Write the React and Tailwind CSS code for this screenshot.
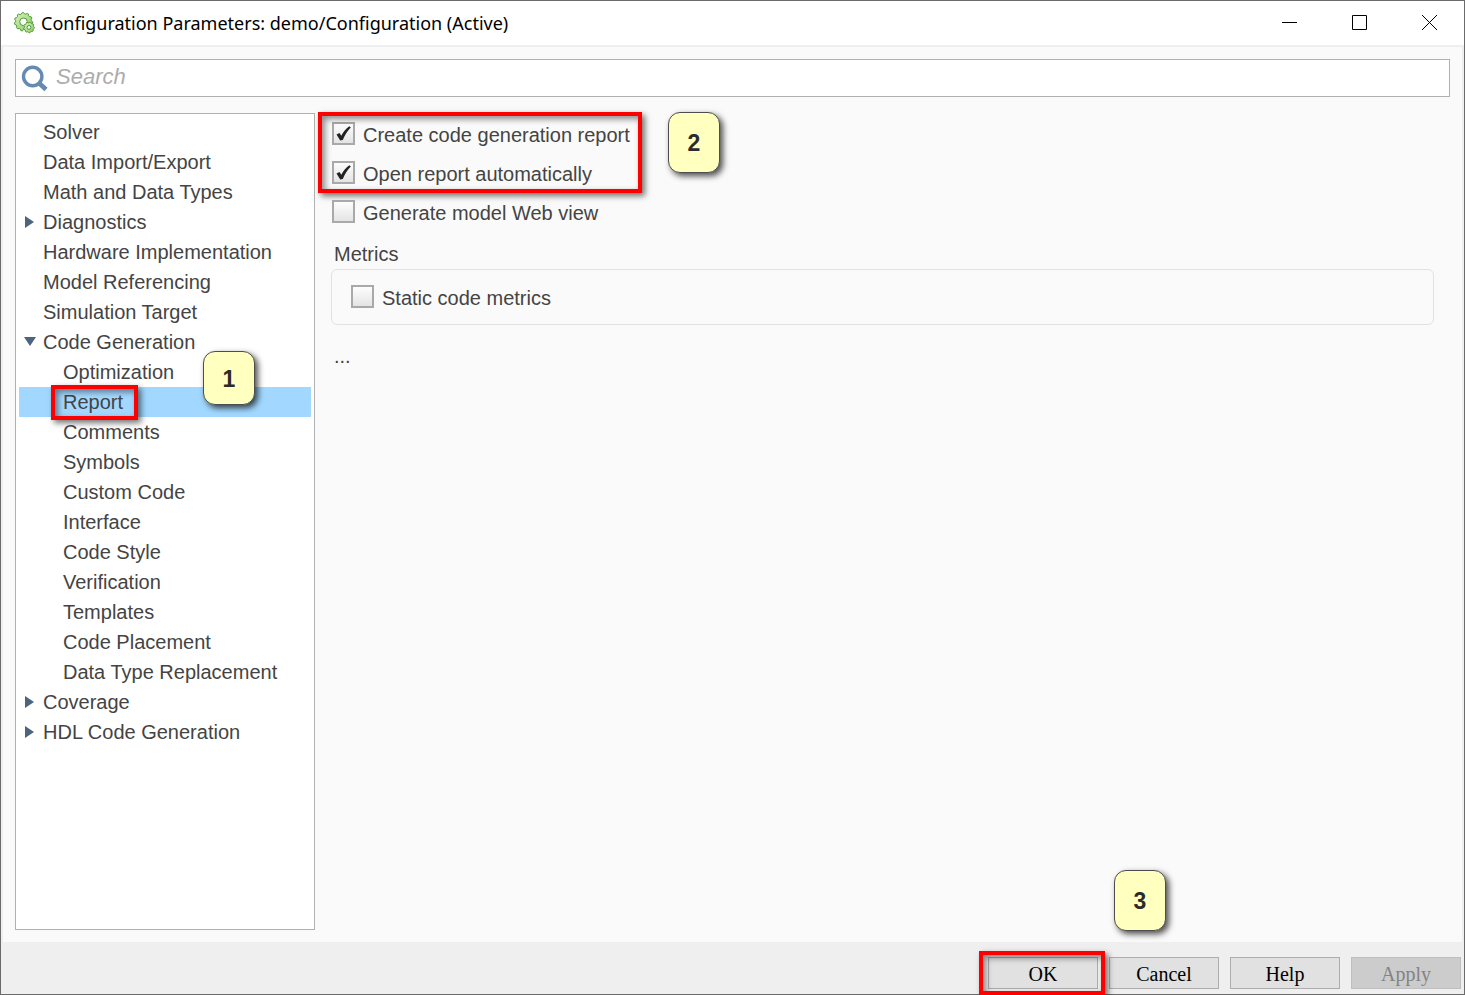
import { useState } from 'react';
import clsx from 'clsx';

const TREE = [
  { label: 'Solver' },
  { label: 'Data Import/Export' },
  { label: 'Math and Data Types' },
  { label: 'Diagnostics', arrow: 'right' },
  { label: 'Hardware Implementation' },
  { label: 'Model Referencing' },
  { label: 'Simulation Target' },
  {
    label: 'Code Generation',
    arrow: 'down',
    children: [
      'Optimization',
      'Report',
      'Comments',
      'Symbols',
      'Custom Code',
      'Interface',
      'Code Style',
      'Verification',
      'Templates',
      'Code Placement',
      'Data Type Replacement',
    ],
  },
  { label: 'Coverage', arrow: 'right' },
  { label: 'HDL Code Generation', arrow: 'right' },
];

function Gear({ cx, cy, r, hole, teeth }) {
  const points = [];
  for (let i = 0; i < teeth * 4; i++) {
    const a = (i / (teeth * 4)) * Math.PI * 2;
    const rad = i % 4 < 2 ? r : r * 0.86;
    points.push(`${cx + Math.cos(a) * rad},${cy + Math.sin(a) * rad}`);
  }
  return (
    <g stroke="#4f9a3c" strokeWidth="1" strokeLinejoin="round">
      <polygon points={points.join(' ')} fill="url(#gearFill)" />
      <circle cx={cx} cy={cy} r={hole} fill="#fff" />
    </g>
  );
}

function GearsIcon() {
  return (
    <svg width="22" height="22" viewBox="0 0 22 22" aria-hidden="true">
      <defs>
        <linearGradient id="gearFill" x1="0" y1="0" x2="1" y2="1">
          <stop offset="0" stopColor="#dcf4bb" />
          <stop offset="1" stopColor="#84cb60" />
        </linearGradient>
      </defs>
      <Gear cx={10.5} cy={9.8} r={9.2} hole={3.8} teeth={11} />
      <Gear cx={16} cy={15.4} r={5.4} hole={1.9} teeth={9} />
    </svg>
  );
}

// Red frame drawn around the thing to click
function Highlight({ className }) {
  return (
    <span
      className={clsx(
        'pointer-events-none absolute border-4 border-[#ff0000] shadow-[3px_3px_6px_rgba(0,0,0,0.55),inset_3px_3px_6px_rgba(0,0,0,0.45)]',
        className
      )}
    />
  );
}

// Numbered step note
function Step({ n, className }) {
  return (
    <span
      className={clsx(
        'pointer-events-none absolute z-10 flex w-[52px] items-center justify-center rounded-xl border border-[#4d4d4d] bg-[#ffffbf] pt-0.5 text-[23px] font-bold text-[#2b2b2b] shadow-[3px_3px_6px_rgba(0,0,0,0.7)]',
        className
      )}
    >
      {n}
    </span>
  );
}

function Arrow({ dir }) {
  return (
    <svg width="24" height="30" viewBox="0 0 24 30" className="shrink-0" aria-hidden="true">
      {dir === 'right' && <path d="M6 9 L15 15 L6 21 Z" fill="#4c647d" />}
      {dir === 'down' && <path d="M5 10 L17 10 L11 19 Z" fill="#4c647d" />}
    </svg>
  );
}

function Check({ label, defaultChecked }) {
  return (
    <label className="flex h-[39px] w-fit items-center gap-2">
      <span className="relative flex">
        <input
          type="checkbox"
          defaultChecked={defaultChecked}
          className="peer size-[23px] appearance-none border-2 border-[#a9a9a9] bg-linear-to-b from-[#fdfdfd] to-[#e4e4e4]"
        />
        <svg
          viewBox="0 0 23 23"
          className="pointer-events-none absolute inset-0 hidden peer-checked:block"
          aria-hidden="true"
        >
          <path d="M4.5 12.5 L7.5 11 L9.3 13.8 C11.3 9.8 13.8 6.8 17.3 4.2 L18.8 5.5 C15.3 9 12.8 13.2 10.8 18 L8.2 18.6 Z" fill="#222" />
        </svg>
      </span>
      <span className="pt-[3px]">{label}</span>
    </label>
  );
}

function TreeItem({ label, arrow, child, selected, onSelect }) {
  return (
    <li>
      <button
        onClick={() => onSelect(label)}
        className={clsx('flex h-[30px] w-full items-center text-left', selected && 'bg-[#a2d8ff]', child && 'pl-5')}
      >
        <Arrow dir={arrow} />
        <span className="relative">
          {label}
          {label === 'Report' && <Highlight className="-top-[3px] -right-[15px] -bottom-1 -left-3" />}
          {label === 'Optimization' && <Step n={1} className="-top-[7px] left-[140px] h-[54px]" />}
        </span>
      </button>
    </li>
  );
}

const dialogButton =
  "h-8 w-[110px] border border-[#adadad] bg-[#e1e1e1] pt-px font-['Liberation_Serif',serif] text-xl text-black disabled:border-[#bfbfbf] disabled:bg-[#cccccc] disabled:text-[#838383]";

export default function App() {
  const [selected, setSelected] = useState('Report');

  return (
    <div className="flex min-h-screen flex-col overflow-hidden bg-[#6b6b6b] p-px font-['Liberation_Sans',Arial,sans-serif] text-xl text-[#444444]">
      {/* Title bar */}
      <header className="flex h-11 items-center bg-white pb-px pl-3">
        <GearsIcon />
        <h1 className="ml-[6px] flex-1 font-['Noto_Sans',sans-serif] text-lg text-black">
          Configuration Parameters: demo/Configuration (Active)
        </h1>
        <button aria-label="Minimize" className="flex h-full w-[70px] items-center justify-center">
          <svg width="15" height="15" shapeRendering="crispEdges"><path d="M0 7.5 H15" stroke="#000" /></svg>
        </button>
        <button aria-label="Maximize" className="flex h-full w-[70px] items-center justify-center">
          <svg width="15" height="15"><path d="M0.5 0.5 H14.5 V14.5 H0.5 Z" fill="none" stroke="#000" /></svg>
        </button>
        <button aria-label="Close" className="flex h-full w-[70px] items-center justify-center">
          <svg width="15" height="15"><path d="M0 0 L15 15 M15 0 L0 15" stroke="#000" /></svg>
        </button>
      </header>

      <div className="flex flex-1 flex-col gap-4 border-x-2 border-t-2 border-[#efefef] bg-[#fafafa] p-3">
        {/* Search */}
        <div className="flex h-[38px] items-center border border-[#b0b0b0] bg-white pl-1">
          <svg width="32" height="32" viewBox="0 0 32 32" className="shrink-0" aria-hidden="true">
            <circle cx="12.7" cy="14.5" r="9.2" fill="none" stroke="#658bb3" strokeWidth="3.4" />
            <path d="M19.5 21.5 L26 27.5" stroke="#658bb3" strokeWidth="4.6" />
          </svg>
          <input
            type="text"
            aria-label="Search"
            placeholder="Search"
            className="h-full flex-1 pl-1 pb-[3px] text-[22px] outline-none placeholder:text-[#acacac] placeholder:italic"
          />
        </div>

        <div className="flex flex-1">
          {/* Category tree */}
          <nav className="w-[300px] shrink-0 border border-[#b0b0b0] bg-white p-[3px]">
            <ul>
              {TREE.flatMap(item => [
                <TreeItem
                  key={item.label}
                  label={item.label}
                  arrow={item.arrow}
                  selected={selected === item.label}
                  onSelect={setSelected}
                />,
                ...(item.children || []).map(c => (
                  <TreeItem key={c} label={c} child selected={selected === c} onSelect={setSelected} />
                )),
              ])}
            </ul>
          </nav>

          {/* Report options */}
          <main className="min-w-0 flex-1 pt-px pr-4 pl-4">
            <div className="relative w-fit pl-px">
              <Check label="Create code generation report" defaultChecked />
              <Check label="Open report automatically" defaultChecked />
              <Highlight className="-top-[2px] -right-3 -bottom-px -left-[13px]" />
              <Step n={2} className="-top-[2px] left-[337px] h-[61px]" />
            </div>
            <div className="pl-px">
              <Check label="Generate model Web view" />
            </div>

            <h2 id="metrics" className="mt-2 pl-[3px] leading-[30px]">Metrics</h2>
            <div role="group" aria-labelledby="metrics" className="flex h-14 items-center rounded-md border border-[#e2e2e2] pb-0.5 pl-[19px]">
              <Check label="Static code metrics" />
            </div>
            <p className="mt-4 pl-[3px] leading-[30px]">...</p>
          </main>
        </div>
      </div>

      {/* Dialog buttons */}
      <footer className="flex h-[52px] items-start justify-end gap-[11px] bg-[#efefef] pt-[15px] pr-[3px]">
        <div className="relative z-10 flex">
          <button className={dialogButton}>OK</button>
          <Highlight className="-top-[6px] -right-[7px] -bottom-[6px] -left-[9px]" />
          <Step n={3} className="-top-[87px] left-[126px] h-[61px]" />
        </div>
        <button className={dialogButton}>Cancel</button>
        <button className={dialogButton}>Help</button>
        <button className={dialogButton} disabled>Apply</button>
      </footer>
    </div>
  );
}
